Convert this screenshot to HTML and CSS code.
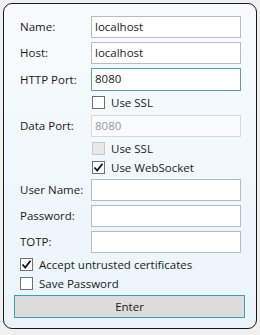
FILE: index.html
```html
<!DOCTYPE html>
<html>
<head>
<meta charset="utf-8" />
<title>Connect</title>
<link rel="stylesheet" href="styles.css">
</head>
<body>

<div class="panel">
  <div class="form">
    <label class="lbl">Name:</label>
    <div class="field">localhost</div>

    <label class="lbl">Host:</label>
    <div class="field">localhost</div>

    <label class="lbl">HTTP Port:</label>
    <div class="field focused">8080</div>

    <div></div>
    <div class="check"><span class="box"></span>Use SSL</div>

    <label class="lbl">Data Port:</label>
    <div class="field disabled">8080</div>

    <div></div>
    <div class="check short off"><span class="box"></span>Use SSL</div>

    <div></div>
    <div class="check short"><span class="box"><svg width="11" height="11" viewBox="0 0 11 11"><path d="M1.5 5.5 L4.2 8.5 L9.5 1.8" fill="none" stroke="#111" stroke-width="1.8"/></svg></span>Use WebSocket</div>

    <label class="lbl">User Name:</label>
    <div class="field"></div>

    <label class="lbl">Password:</label>
    <div class="field"></div>

    <label class="lbl">TOTP:</label>
    <div class="field"></div>
  </div>

  <div class="check wide"><span class="box"><svg width="11" height="11" viewBox="0 0 11 11"><path d="M1.5 5.5 L4.2 8.5 L9.5 1.8" fill="none" stroke="#111" stroke-width="1.8"/></svg></span>Accept untrusted certificates</div>
  <div class="check wide next"><span class="box"></span>Save Password</div>

  <div class="button">Enter</div>
</div>

</body>
</html>
```

FILE: styles.css
```css
html, body {
  margin: 0;
  padding: 0;
  background: #f0f0f0;
}
body {
  font-family: "Open Sans", "Noto Sans", sans-serif;
  font-size: 11.5px;
  color: #1b1b1b;
  padding: 3px;
}
.panel {
  width: 254px;
  height: 326px;
  box-sizing: border-box;
  border: 1.5px solid #1a1a1a;
  border-radius: 9px;
  background: linear-gradient(#f8fbfd, #eaf4fa);
  padding: 11.5px 10px 0 16px;
}
.form {
  display: grid;
  grid-template-columns: 71px 150px;
  row-gap: 4px;
}
.lbl {
  display: flex;
  align-items: center;
}
.field {
  height: 22px;
  box-sizing: border-box;
  border: 1px solid #b8bcc2;
  background: #fff;
  padding: 0 3px;
  line-height: 20px;
}
.field.focused {
  height: 23px;
  border-color: #5b9cbc;
}
.field.disabled {
  color: #9a9a9a;
  border-color: #d6d9dc;
  background: #f9fbfc;
}
.check {
  display: flex;
  align-items: center;
  height: 16px;
  gap: 6px;
  padding-left: 1px;
}
.check.short {
  height: 15px;
}
.box {
  width: 13px;
  height: 13px;
  box-sizing: border-box;
  border: 1px solid #707070;
  background: #fff;
  display: flex;
  align-items: center;
  justify-content: center;
}
.check.off .box {
  border-color: #c8c8c8;
  background: #e8e8e8;
}
.check.wide {
  padding-left: 0;
  margin-top: 4px;
}
.check.wide.next {
  margin-top: 3px;
}
.button {
  margin: 3px 0 0 -6px;
  width: 231px;
  height: 23px;
  box-sizing: border-box;
  border: 1px solid #3f9bb8;
  background: #dcdcdc;
  text-align: center;
  line-height: 21px;
}
```
